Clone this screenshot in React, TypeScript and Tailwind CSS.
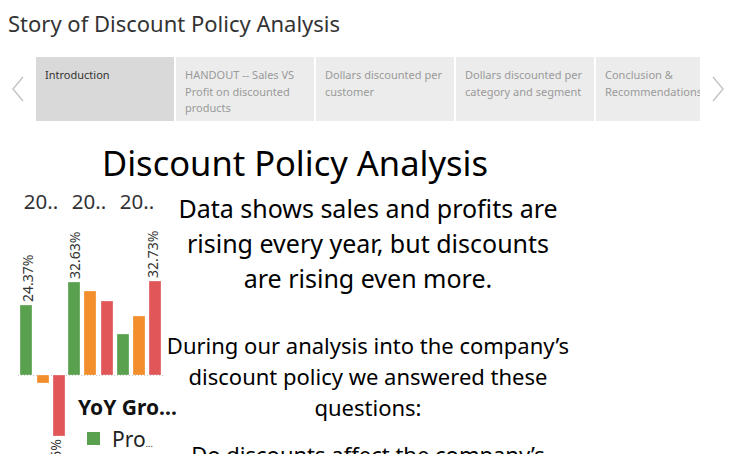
import React from "react";

const tabs = [
  { label: "Introduction", active: true },
  { label: "HANDOUT -- Sales VS Profit on discounted products" },
  { label: "Dollars discounted per customer" },
  { label: "Dollars discounted per category and segment" },
  { label: "Conclusion & Recommendations" },
];

const GREEN = "#59a14f";
const ORANGE = "#f28e2b";
const RED = "#e15759";

// page y - 185 = svg y ; baseline page 375 => 190
const bars = [
  { x: 20, top: 120, bottom: 190, c: GREEN },
  { x: 37, top: 190, bottom: 198, c: ORANGE },
  { x: 53, top: 190, bottom: 251, c: RED },
  { x: 68, top: 97, bottom: 190, c: GREEN },
  { x: 84, top: 106, bottom: 190, c: ORANGE },
  { x: 101, top: 116, bottom: 190, c: RED },
  { x: 117, top: 149, bottom: 190, c: GREEN },
  { x: 133, top: 131, bottom: 190, c: ORANGE },
  { x: 149, top: 96, bottom: 190, c: RED },
];

function Chart() {
  return (
    <svg width="166" height="269" viewBox="0 0 166 269" className="shrink-0 block overflow-visible">
      <g fontFamily="'Noto Sans', sans-serif" fill="#333">
        <text x="41" y="24" fontSize="20.5" textAnchor="middle">20..</text>
        <text x="89" y="24" fontSize="20.5" textAnchor="middle">20..</text>
        <text x="137" y="24" fontSize="20.5" textAnchor="middle">20..</text>
      </g>
      <line x1="18" y1="190.5" x2="163" y2="190.5" stroke="#c8c8c8" strokeWidth="1" strokeDasharray="1 2" />
      {bars.map((b, i) => (
        <rect
          key={i}
          x={b.x}
          y={b.top}
          width="12"
          height={b.bottom - b.top}
          fill={b.c}
          stroke="#ffffff"
          strokeOpacity="0.5"
          strokeWidth="0.6"
        />
      ))}
      <g fontFamily="'Noto Sans', sans-serif" fontSize="14" fill="#333">
        <text transform="translate(33 117) rotate(-90)">24.37%</text>
        <text transform="translate(80 94) rotate(-90)">32.63%</text>
        <text transform="translate(158 93) rotate(-90)">32.73%</text>
        <text transform="translate(61 254) rotate(-90)" textAnchor="end">-41.15%</text>
      </g>
      <text x="78" y="230" fontFamily="'Noto Sans', sans-serif" fontSize="21" fontWeight="700" fill="#111">
        YoY Gro...
      </text>
      <rect x="87" y="247" width="13" height="13" fill={GREEN} />
      <text x="112" y="262" fontFamily="'Noto Sans', sans-serif" fontSize="21" fill="#222">
        Pro<tspan fontSize="9">...</tspan>
      </text>
    </svg>
  );
}

function Chevron({ dir }: { dir: "left" | "right" }) {
  return (
    <svg width="14" height="26" viewBox="0 0 14 26">
      {dir === "left" ? (
        <polyline points="12,1 2,13 12,25" fill="none" stroke="#c6c6c6" strokeWidth="1.5" />
      ) : (
        <polyline points="2,1 12,13 2,25" fill="none" stroke="#c6c6c6" strokeWidth="1.5" />
      )}
    </svg>
  );
}

export default function App() {
  return (
    <div
      className="w-[736px] h-[454px] overflow-hidden bg-white"
      style={{ fontFamily: "'Noto Sans', sans-serif" }}
    >
      <div className="h-[57px] pl-[8px] pt-[8px] text-[22px] leading-[30px] text-[#333]">
        Story of Discount Policy Analysis
      </div>
      <div className="flex h-[64px]">
        <div className="w-[36px] flex items-center justify-center">
          <Chevron dir="left" />
        </div>
        <div className="w-[664px] flex gap-[2px] overflow-hidden">
          {tabs.map((t) => (
            <div
              key={t.label}
              className={
                "w-[138px] shrink-0 h-[64px] overflow-hidden pl-[9px] pr-[4px] pt-[10px] text-[11px] leading-[16.5px] " +
                (t.active ? "bg-[#d9d9d9] text-[#333]" : "bg-[#ececec] text-[#9a9a9a]")
              }
            >
              {t.label}
            </div>
          ))}
        </div>
        <div className="w-[36px] flex items-center justify-center">
          <Chevron dir="right" />
        </div>
      </div>
      <div className="w-[590px] mt-[22px] text-center text-[34.5px] leading-[40px] text-black">
        Discount Policy Analysis
      </div>
      <div className="flex mt-[2px]">
        <Chart />
        <div className="w-[404px] shrink-0 pt-[6px] text-center text-black">
          <p className="text-[25px] leading-[35px]">
            Data shows sales and profits are rising every year, but discounts are rising even more.
          </p>
          <p className="mt-[34px] text-[22px] leading-[31px]">
            During our analysis into the company’s discount policy we answered these questions:
          </p>
          <p className="mt-[16px] text-[22px] leading-[31px]">
            Do discounts affect the company’s profits?
          </p>
        </div>
      </div>
    </div>
  );
}
